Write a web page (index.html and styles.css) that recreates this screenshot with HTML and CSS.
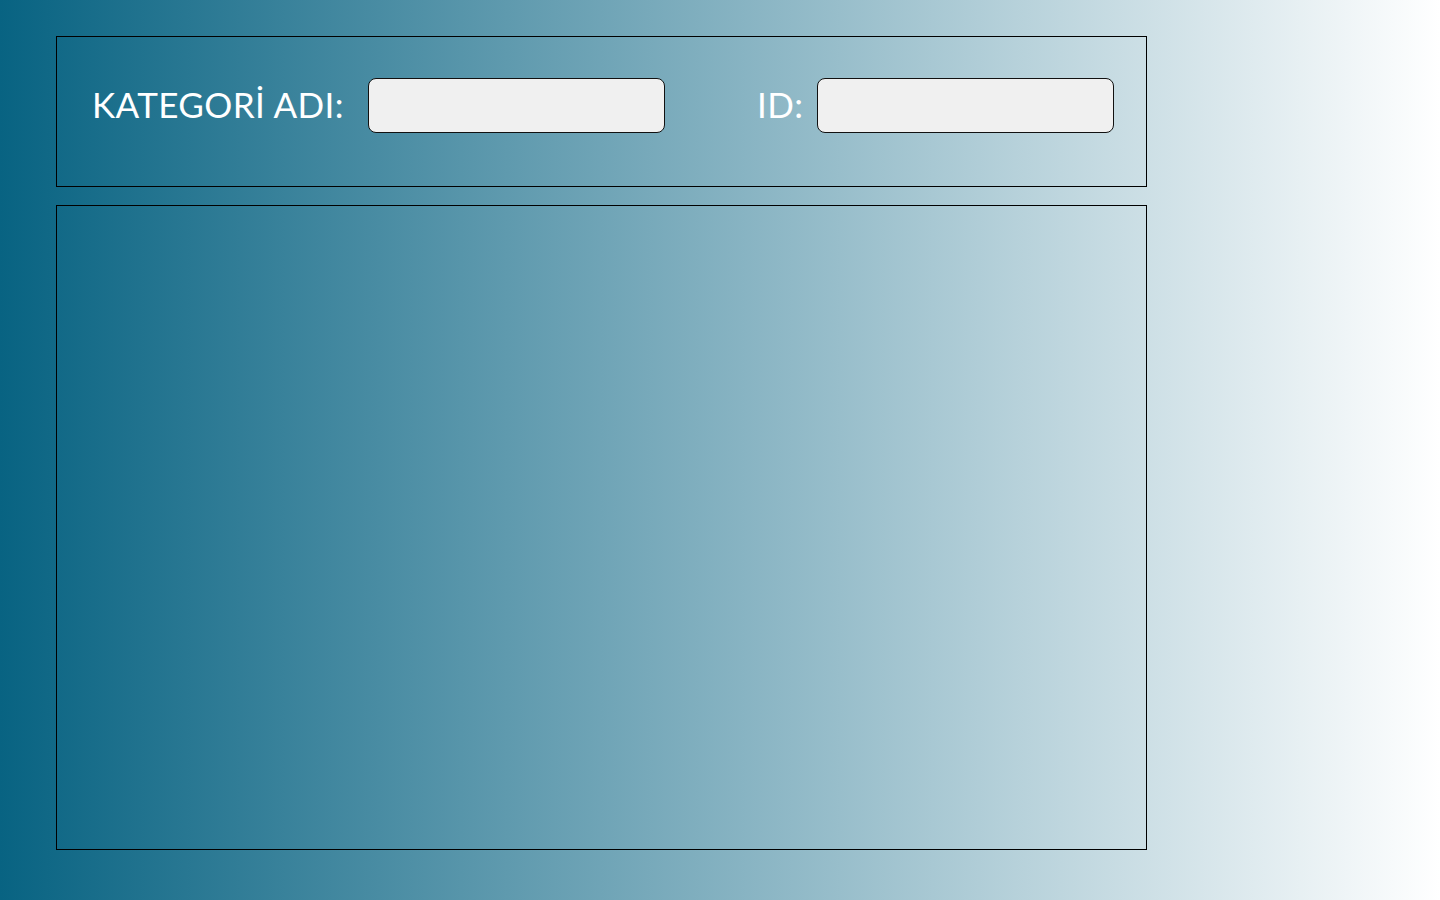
FILE: index.html
```html
<!DOCTYPE html>
<html lang="tr">
<head>
<meta charset="utf-8">
<title>Kategori</title>
<link rel="stylesheet" href="styles.css">
</head>
<body>
<main class="page">
  <section class="form-panel">
    <label class="field-label label-name" for="name">KATEGORİ ADI:</label>
    <input class="field-input" id="name" type="text">
    <label class="field-label label-id" for="cid">ID:</label>
    <input class="field-input" id="cid" type="text">
  </section>
  <section class="list-panel"></section>
</main>
</body>
</html>
```
FILE: styles.css
```css
html, body {
  margin: 0;
  padding: 0;
  height: 100%;
}
body {
  background: linear-gradient(to right, #086382 0%, #ffffff 100%);
  font-family: "Lato", "Noto Sans", sans-serif;
}
.page {
  padding: 36px 0 0 56px;
  width: 1091px;
  display: flex;
  flex-direction: column;
  gap: 18px;
}
.form-panel {
  box-sizing: border-box;
  height: 151px;
  border: 1px solid #000;
  display: flex;
  align-items: center;
  padding: 0 0 12px 35px;
}
.field-label {
  color: #fff;
  font-size: 35px;
  font-weight: 400;
  letter-spacing: 0.4px;
  line-height: 1;
  white-space: nowrap;
  margin-top: -2px;
  flex: none;
}
.label-name {
  width: 276px;
}
.label-id {
  margin-left: 92px;
  width: 60px;
}
.field-input {
  flex: none;
  box-sizing: border-box;
  width: 297px;
  height: 55px;
  border: 1px solid #111;
  border-radius: 8px;
  background: #f0f0f0;
  margin: 0;
  padding: 0 10px;
}
.list-panel {
  box-sizing: border-box;
  height: 645px;
  border: 1px solid #000;
}
```
